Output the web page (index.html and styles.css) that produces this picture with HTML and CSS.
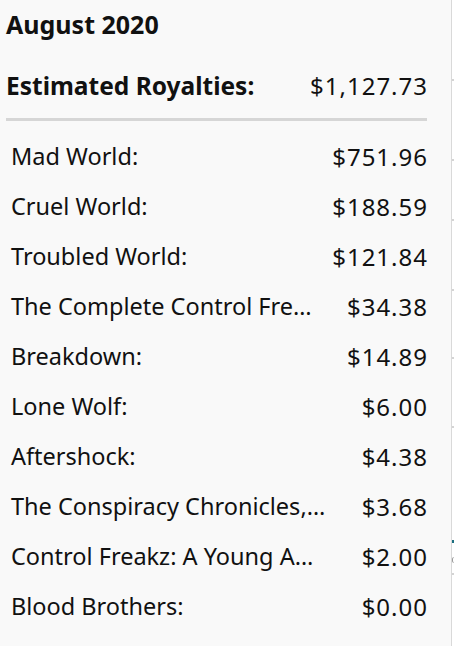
FILE: index.html
```html
<!DOCTYPE html>
<html>
<head>
<meta charset="utf-8">
<link rel="stylesheet" href="styles.css">
</head>
<body>
<div class="page">
  <div class="card">
    <h1 class="month">August 2020</h1>
    <div class="total">
      <span class="total-label">Estimated Royalties:</span>
      <span class="total-amount">$1,127.73</span>
    </div>
    <div class="rule"></div>
    <ul class="list">
      <li class="row"><span class="title">Mad World:</span><span class="amt">$751.96</span></li>
      <li class="row"><span class="title">Cruel World:</span><span class="amt">$188.59</span></li>
      <li class="row"><span class="title">Troubled World:</span><span class="amt">$121.84</span></li>
      <li class="row"><span class="title">The Complete Control Fre…</span><span class="amt">$34.38</span></li>
      <li class="row"><span class="title">Breakdown:</span><span class="amt">$14.89</span></li>
      <li class="row"><span class="title">Lone Wolf:</span><span class="amt">$6.00</span></li>
      <li class="row"><span class="title">Aftershock:</span><span class="amt">$4.38</span></li>
      <li class="row"><span class="title">The Conspiracy Chronicles,…</span><span class="amt">$3.68</span></li>
      <li class="row"><span class="title">Control Freakz: A Young A…</span><span class="amt">$2.00</span></li>
      <li class="row"><span class="title">Blood Brothers:</span><span class="amt">$0.00</span></li>
    </ul>
  </div>
  <div class="side">
    <span class="tick t1"></span>
    <span class="tick t2"></span>
    <span class="tick t3"></span>
    <span class="tick t4"></span>
    <span class="tick t5"></span>
    <span class="tick t6"></span>
    <span class="tick teal"></span>
    <span class="side-e"></span>
    <span class="tick t7"></span>
  </div>
</div>
</body>
</html>
```

FILE: styles.css
```css
* { box-sizing: border-box; }
html, body {
  margin: 0;
  padding: 0;
  background: #ffffff;
}
body {
  font-family: "Noto Sans", "Open Sans", "DejaVu Sans", sans-serif;
  color: #111111;
  width: 454px;
  height: 646px;
  overflow: hidden;
}
.page {
  display: flex;
  height: 646px;
}
.card {
  width: 452px;
  flex: 0 0 452px;
  background: #f9f9f9;
  border-right: 1px solid #d9d9d9;
  padding: 0 24px 0 6px;
}
.month {
  margin: 0;
  padding-top: 8px;
  font-size: 25px;
  font-weight: 700;
  line-height: 32px;
}
.total {
  display: flex;
  justify-content: space-between;
  align-items: center;
  margin-top: 29px;
  height: 32px;
  font-size: 24.5px;
}
.total-label { font-weight: 700; }
.total-amount {
  font-weight: 400;
  font-size: 24px;
  letter-spacing: 1px;
  margin-right: -1px;
}
.rule {
  margin-top: 17px;
  height: 3px;
  background: #d6d6d6;
}
.list {
  list-style: none;
  margin: 0;
  padding: 10px 0 0 5px;
}
.row {
  display: flex;
  justify-content: space-between;
  align-items: center;
  height: 50px;
  font-size: 23.5px;
}
.title { white-space: nowrap; }
.amt {
  font-size: 24px;
  letter-spacing: 1px;
  margin-right: -1px;
}
.side {
  flex: 1;
  display: flex;
  flex-direction: column;
  background: #ffffff;
}
.tick {
  display: block;
  height: 2px;
  background: #d4d4d4;
}
.t1 { margin-top: 79px; }
.t2 { margin-top: 78px; }
.t3 { margin-top: 58px; }
.t4 { margin-top: 68px; }
.t5 { margin-top: 66px; }
.t6 { margin-top: 67px; }
.teal { margin-top: 112px; height: 3px; background: #1b6f80; }
.side-e {
  display: block;
  height: 6px;
  margin-top: 14px;
  border-left: 1px solid #9a9a9a;
  border-top: 1px solid #bdbdbd;
  border-bottom: 1px solid #bdbdbd;
  border-radius: 3px 0 0 3px;
}
.t7 { margin-top: 10px; }
```
